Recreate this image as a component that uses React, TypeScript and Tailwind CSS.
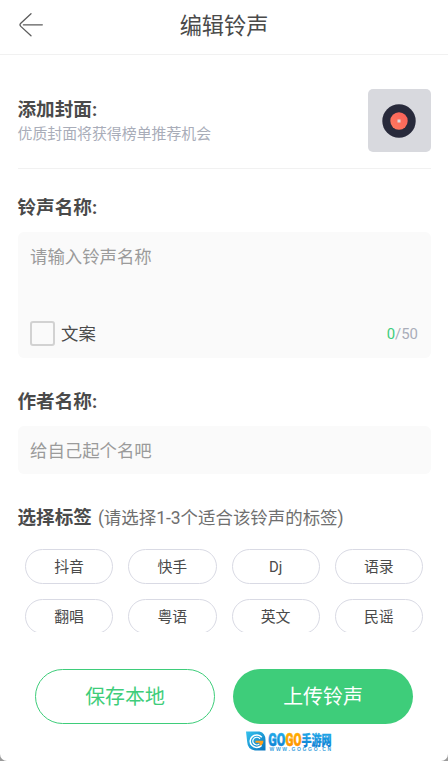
import { useState } from 'react';

const TAGS = ['抖音', '快手', 'Dj', '语录', '翻唱', '粤语', '英文', '民谣'];
const MAX_LENGTH = 50;

function BackIcon() {
  return (
    <svg className="w-[26px] h-[26px]" viewBox="0 0 26 26" fill="none" stroke="#5c5c5c" strokeWidth={1.3} strokeLinecap="round">
      <path d="M13 1.8 L2.8 11.2 Q1.2 12.8 2.8 14.4 L13 23.8" />
      <path d="M5.4 12.8 H24.3" />
    </svg>
  );
}

function CoverPicker() {
  return (
    <button className="flex items-center justify-center w-[63px] h-[63px] rounded-[5px] bg-[#d8d9de]">
      <svg className="w-[34px] h-[34px]" viewBox="0 0 34 34">
        <defs>
          <linearGradient id="disc" x1="1" y1="0" x2="0" y2="1">
            <stop offset="0" stopColor="#f95f58" />
            <stop offset="1" stopColor="#ff7b60" />
          </linearGradient>
        </defs>
        <circle cx="17" cy="17" r="16.7" fill="#282a3b" />
        <circle cx="17" cy="17" r="8.7" fill="url(#disc)" />
        <rect x="15.5" y="15.5" width="3" height="3" fill="#dcdde2" />
      </svg>
    </button>
  );
}

function SiteLogo() {
  return (
    <svg className="w-[88px] h-[24px]" viewBox="0 0 88 24">
      <defs>
        <linearGradient id="badge" x1="0" y1="0" x2="1" y2="1">
          <stop offset="0" stopColor="#35c3ee" />
          <stop offset="1" stopColor="#0872bd" />
        </linearGradient>
        <linearGradient id="blue" x1="0" y1="0" x2="0" y2="1">
          <stop offset="0" stopColor="#27b5ee" />
          <stop offset="1" stopColor="#0878cf" />
        </linearGradient>
        <linearGradient id="orange" x1="0" y1="0" x2="0" y2="1">
          <stop offset="0" stopColor="#ffb600" />
          <stop offset="1" stopColor="#ff8a00" />
        </linearGradient>
      </defs>
      <path d="M0 1.5 H13.5 Q19.5 3 19.5 10 V20.5 H9 Q1.5 19.5 1.2 12 Z" fill="url(#badge)" />
      <path d="M15.8 7.2 A6.6 6.2 0 1 0 15.6 15.4" fill="none" stroke="#fff" strokeWidth={1.5} />
      <path d="M14 8.8 A4 3.8 0 1 0 13.4 14" fill="none" stroke="#fff" strokeWidth={1.2} />
      <path d="M9.5 10.8 H17.4 Q17.4 14.6 14 15.8 L13.4 12.8 H9.5 Z" fill="#ff9f1a" />
      <g fontFamily="Roboto, 'Liberation Sans', sans-serif" fontWeight={900} fontSize="18.5">
        <text x="22.2" y="15.8" textLength="17" lengthAdjust="spacingAndGlyphs" fill="url(#blue)" stroke="url(#blue)" strokeWidth={0.6}>GO</text>
        <text x="39.6" y="15.8" textLength="16" lengthAdjust="spacingAndGlyphs" fill="url(#orange)" stroke="url(#orange)" strokeWidth={0.6}>GO</text>
      </g>
      <text x="55.6" y="14.8" textLength="30" lengthAdjust="spacingAndGlyphs" fill="url(#blue)" stroke="url(#blue)" strokeWidth={0.3} fontFamily="'Noto Sans CJK SC', sans-serif" fontWeight={900} fontSize="13.4">手游网</text>
      <text x="23.6" y="21" textLength="61.5" fill="#3a9fdd" fontFamily="'Liberation Sans', sans-serif" fontWeight={700} fontSize="5">WWW.GOGGO.CN</text>
    </svg>
  );
}

export default function App() {
  const [name, setName] = useState('');
  const [author, setAuthor] = useState('');
  const [withText, setWithText] = useState(false);

  return (
    <div className="bg-[#9b9b9b]">
      <div className="flex flex-col h-[761px] overflow-hidden rounded-b-[7px] bg-white font-[Roboto,'Noto_Sans_CJK_SC',sans-serif] text-[#4a4a4a]">
        {/* Header */}
        <header className="grid grid-cols-[60px_1fr_60px] items-center h-[55px] shrink-0 pb-[5px] border-b border-[#f1f1f1]">
          <button className="pl-[18px]">
            <BackIcon />
          </button>
          <h1 className="pt-0.5 text-center text-[22.2px] leading-[30px]">编辑铃声</h1>
        </header>

        <main className="flex flex-col h-[577px] shrink-0 overflow-hidden px-[17.5px]">
          {/* Cover */}
          <section className="flex justify-between h-[114px] shrink-0 pt-[34px] border-b border-[#f1f1f1]">
            <div className="pt-[9px]">
              <h2 className="text-[18.6px] leading-[25px] font-bold">添加封面:</h2>
              <p className="text-[14.9px] leading-[22px] text-[#a9adb9]">优质封面将获得榜单推荐机会</p>
            </div>
            <CoverPicker />
          </section>

          {/* Ringtone name */}
          <h2 className="mt-[27px] text-[18.6px] leading-[25px] font-bold">铃声名称:</h2>
          <div className="flex flex-col justify-between h-[126px] shrink-0 mt-[11px] px-[12.5px] pt-[13px] pb-3 rounded-md bg-[#fafafa]">
            <input
              className="w-full text-[17.4px] leading-[25px] outline-none placeholder:text-[#9b9b9b]"
              placeholder="请输入铃声名称"
              maxLength={MAX_LENGTH}
              value={name}
              onChange={e => setName(e.target.value)}
            />
            <div className="flex items-center justify-between h-[25px]">
              <label className="flex items-center gap-[6px] text-[17.4px] leading-[25px]">
                <input
                  type="checkbox"
                  className="appearance-none w-[25px] h-[25px] rounded-[3px] border-2 border-[#d2d2d2] checked:bg-[#3ecd7a]"
                  checked={withText}
                  onChange={e => setWithText(e.target.checked)}
                />
                <span className="pt-0.5">文案</span>
              </label>
              <span className="pt-0.5 text-[14.9px] text-[#a9adb9]">
                <span className="text-[#3ecd7a]">{name.length}</span>/{MAX_LENGTH}
              </span>
            </div>
          </div>

          {/* Author */}
          <h2 className="mt-8 text-[18.6px] leading-[25px] font-bold">作者名称:</h2>
          <div className="flex items-center h-12 shrink-0 mt-[11px] pt-0.5 px-[12.5px] rounded-md bg-[#fafafa]">
            <input
              className="w-full text-[17.4px] leading-[25px] outline-none placeholder:text-[#9b9b9b]"
              placeholder="给自己起个名吧"
              value={author}
              onChange={e => setAuthor(e.target.value)}
            />
          </div>

          {/* Tags */}
          <div className="flex items-center gap-[6px] mt-8 leading-[25px]">
            <h2 className="text-[18.6px] font-bold">选择标签</h2>
            <span className="text-[17.45px] text-[#6f6f6f]">(请选择1-3个适合该铃声的标签)</span>
          </div>
          <div className="grid grid-cols-4 gap-[15px] mt-[18px] px-[7.5px]">
            {TAGS.map(tag => (
              <button key={tag} className="h-[35px] pt-0.5 rounded-full border border-[#d9dae4] text-[14.9px]">
                {tag}
              </button>
            ))}
          </div>
        </main>

        {/* Actions */}
        <footer className="flex flex-col pt-[37px]">
          <div className="flex gap-[18px] pl-[35px]">
            <button className="w-[180px] h-[55px] pt-0.5 rounded-full border border-[#3ecd7a] text-[19.9px] text-[#3ecd7a]">
              保存本地
            </button>
            <button className="w-[180px] h-[55px] pt-0.5 rounded-full bg-[#3ecd7a] text-[19.9px] text-white">
              上传铃声
            </button>
          </div>
          <div className="pl-[246px] pt-[6px]">
            <SiteLogo />
          </div>
        </footer>
      </div>
    </div>
  );
}
